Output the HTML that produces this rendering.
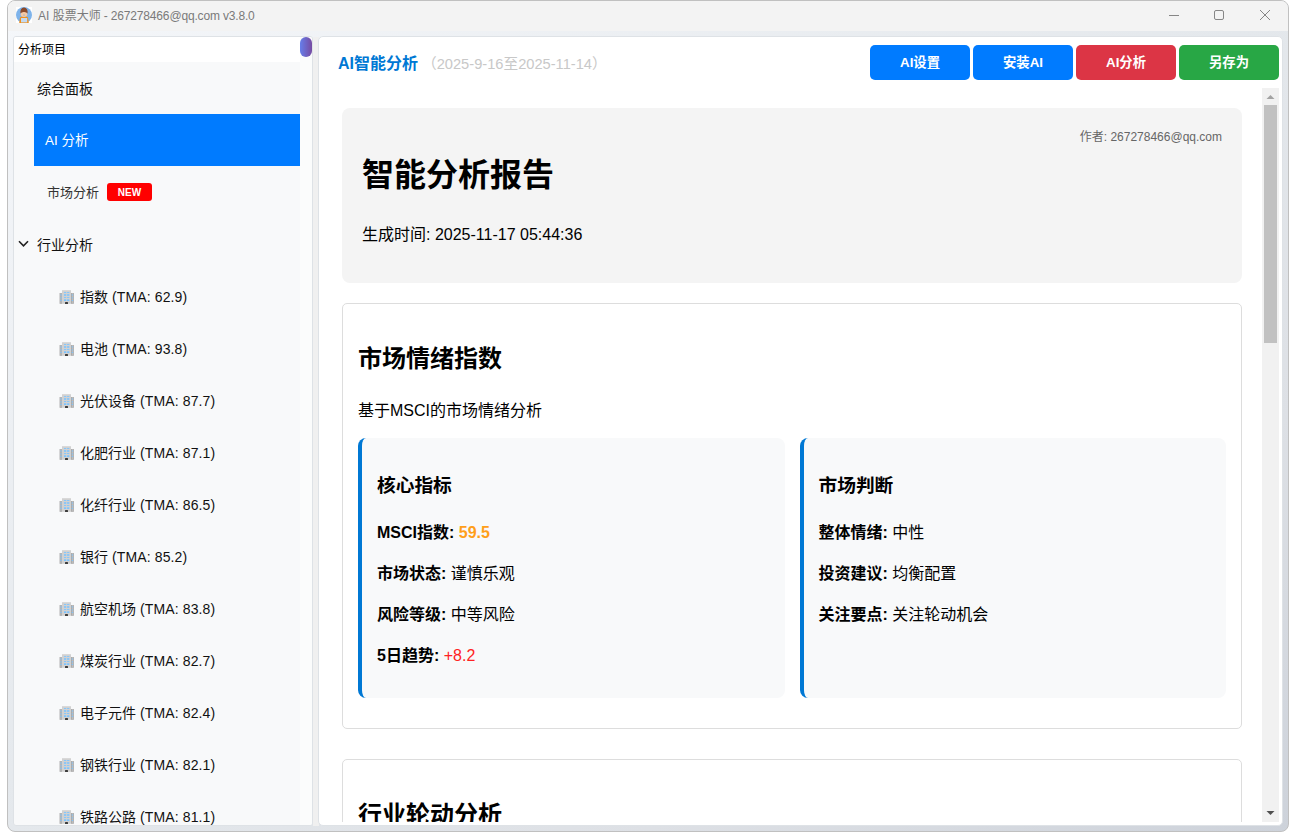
<!DOCTYPE html>
<html lang="zh-CN">
<head>
<meta charset="utf-8">
<title>AI 股票大师</title>
<style>
*{box-sizing:border-box;}
html,body{margin:0;padding:0;}
body{width:1296px;height:839px;overflow:hidden;background:#fff;position:relative;
  font-family:"Liberation Sans","Noto Sans CJK SC",sans-serif;color:#000;}
.win{position:absolute;left:7px;top:0;width:1282px;height:832px;border:1px solid #c0c0c0;border-radius:8px;overflow:hidden;
  background:linear-gradient(to bottom right,#f5f7fa 0%,#e4e8ec 50%,#dde0e5 75%,#cdd2da 100%);}
.tbar{position:absolute;left:0;top:0;width:1280px;height:30px;background:#f3f3f3;}
.ttext{position:absolute;left:30px;top:7px;font-size:12px;line-height:16px;color:#7a7a7a;white-space:nowrap;}
.ticon{position:absolute;left:8px;top:6px;width:16px;height:16px;}
.ctl{position:absolute;top:0;}

/* left panel */
.left{position:absolute;left:5px;top:35px;width:300px;height:790px;background:#f8f9fa;border:1px solid #dee2e6;border-radius:3px;overflow:hidden;}
.lhead{position:absolute;left:0;top:0;width:286px;height:25px;background:#fff;font-size:12px;line-height:27px;overflow:hidden;padding-left:4px;color:#000;}
.lsb{position:absolute;left:286px;top:0;width:12px;height:788px;background:#fbfcfc;}
.lsb i{position:absolute;left:0;top:0;width:12px;height:20px;border-radius:6px;background:linear-gradient(90deg,#667eea,#764ba2);}
.it{position:absolute;left:0;width:286px;height:52px;line-height:54px;font-size:14px;white-space:nowrap;color:#111;overflow:hidden;}
.it.sel{left:20px;width:266px;background:#007bff;color:#fff;font-size:13.5px;}
.badge{position:absolute;left:93px;top:17px;width:45px;height:18px;border-radius:3px;background:#ff0000;color:#fff;font-size:10px;font-weight:bold;line-height:20px;text-align:center;overflow:hidden;}
.bico{position:absolute;left:46px;top:20px;width:14px;height:14px;overflow:visible;}

.split{position:absolute;left:305px;top:36px;width:6px;height:789px;background:#f0f0f0;}

/* right panel */
.right{position:absolute;left:310px;top:35px;width:965px;height:790px;background:#fff;border:1px solid #dee2e6;border-radius:5px;overflow:hidden;}
.rt{position:absolute;left:19px;top:15px;font-size:16px;font-weight:bold;color:#0078d4;line-height:24px;white-space:nowrap;}
.rd{position:absolute;left:103px;top:15px;font-size:14.67px;color:#c8c8c8;line-height:24px;white-space:nowrap;}
.btn{position:absolute;top:8px;width:100px;height:35px;border-radius:5px;color:#fff;font-size:13.33px;font-weight:bold;line-height:35px;text-align:center;}

.web{position:absolute;left:8px;top:51px;width:952px;height:734px;overflow:hidden;background:#fff;}
.vsb{position:absolute;left:935px;top:0;width:17px;height:734px;background:#f1f1f1;}
.vsb i{position:absolute;left:2px;top:17px;width:13px;height:238px;background:#c1c1c1;}
.doc{position:absolute;left:0;top:0;width:935px;padding:20px 20px 0 15px;font-size:16px;line-height:25px;color:#000;}
.hero{position:relative;height:175px;background:#f4f4f4;border-radius:8px;margin-bottom:20px;}
.hero h1{position:absolute;left:20px;top:43px;margin:0;font-size:32px;line-height:48px;font-weight:bold;}
.hero .gen{position:absolute;left:20px;top:115px;font-size:16px;line-height:24px;}
.hero .au{position:absolute;right:20px;top:21px;font-size:12px;line-height:16px;color:#666;}
.card{border:1px solid #ddd;border-radius:5px;padding:15px;margin-bottom:30px;}
.card h2{margin:22px 0 21px;font-size:24px;line-height:36px;font-weight:bold;}
.card p{margin:16px 0;}
.card>p{margin-bottom:15px;}
.grid{display:grid;grid-template-columns:1fr 1fr;gap:15px;margin-bottom:15px;}
.sub{background:#f8f9fa;border-left:4px solid #0078d4;border-radius:8px;padding:15px;height:260px;}
.sub h3{margin:19px 0 20px;font-size:18.72px;line-height:28px;font-weight:bold;}
b{font-weight:bold;}
.ls{letter-spacing:0.12px;}
</style>
</head>
<body>
<div class="win">
  <div class="tbar">
    <svg class="ticon" viewBox="0 0 16 16"><rect width="16" height="16" fill="#fff"/><circle cx="8" cy="8" r="8" fill="#7eb3ea"/><path d="M3.2 16 L4 10.4 Q8 8.2 12 10.4 L12.8 16 Z" fill="#ef8f1c"/><rect x="5" y="11" width="6.2" height="4.4" fill="#c3d9f1"/><ellipse cx="8" cy="7.2" rx="3.3" ry="2.7" fill="#f6c8a3"/><rect x="7" y="7.4" width="2" height="1.2" rx="0.6" fill="#9bb4cc"/><path d="M4.4 6.6 Q3.9 0.6 8 0.4 Q12.1 0.6 11.6 6.6 Q10.6 4.9 8 5 Q5.4 4.9 4.4 6.6Z" fill="#8b4a2b"/></svg>
    <div class="ttext">AI 股票大师<span style="letter-spacing:-0.17px"> - 267278466@qq.com v3.8.0</span></div>
    <svg class="ctl" style="left:1150px;top:-1px" width="130" height="30" viewBox="0 0 130 30" fill="none" stroke="#868686" stroke-width="1">
      <path d="M11 15.5 H21"/>
      <rect x="56.5" y="10.5" width="9" height="9" rx="1.5"/>
      <path d="M102 10 L112 20 M112 10 L102 20"/>
    </svg>
  </div>

  <div class="left">
    <div class="lhead">分析项目</div>
    <div class="it" style="top:25px;padding-left:23px">综合面板</div>
    <div class="it sel" style="top:77px;padding-left:11px">AI 分析</div>
    <div class="it" style="top:129px;padding-left:33px;font-size:13px;color:#333">市场分析<span class="badge">NEW</span></div>
    <div class="it" style="top:181px;padding-left:23px">行业分析
      <svg style="position:absolute;left:4px;top:22px" width="11" height="8" viewBox="0 0 11 8" fill="none" stroke="#222" stroke-width="1.6"><path d="M1 1.2 L5.5 5.8 L10 1.2"/></svg>
    </div>
    <div class="it" style="top:233px;padding-left:66px"><svg class="bico" viewBox="0 0 14 14"><use href="#bld"/></svg>指数<span class="ls"> (TMA: 62.9)</span></div>
    <div class="it" style="top:285px;padding-left:66px"><svg class="bico" viewBox="0 0 14 14"><use href="#bld"/></svg>电池<span class="ls"> (TMA: 93.8)</span></div>
    <div class="it" style="top:337px;padding-left:66px"><svg class="bico" viewBox="0 0 14 14"><use href="#bld"/></svg>光伏设备<span class="ls"> (TMA: 87.7)</span></div>
    <div class="it" style="top:389px;padding-left:66px"><svg class="bico" viewBox="0 0 14 14"><use href="#bld"/></svg>化肥行业<span class="ls"> (TMA: 87.1)</span></div>
    <div class="it" style="top:441px;padding-left:66px"><svg class="bico" viewBox="0 0 14 14"><use href="#bld"/></svg>化纤行业<span class="ls"> (TMA: 86.5)</span></div>
    <div class="it" style="top:493px;padding-left:66px"><svg class="bico" viewBox="0 0 14 14"><use href="#bld"/></svg>银行<span class="ls"> (TMA: 85.2)</span></div>
    <div class="it" style="top:545px;padding-left:66px"><svg class="bico" viewBox="0 0 14 14"><use href="#bld"/></svg>航空机场<span class="ls"> (TMA: 83.8)</span></div>
    <div class="it" style="top:597px;padding-left:66px"><svg class="bico" viewBox="0 0 14 14"><use href="#bld"/></svg>煤炭行业<span class="ls"> (TMA: 82.7)</span></div>
    <div class="it" style="top:649px;padding-left:66px"><svg class="bico" viewBox="0 0 14 14"><use href="#bld"/></svg>电子元件<span class="ls"> (TMA: 82.4)</span></div>
    <div class="it" style="top:701px;padding-left:66px"><svg class="bico" viewBox="0 0 14 14"><use href="#bld"/></svg>钢铁行业<span class="ls"> (TMA: 82.1)</span></div>
    <div class="it" style="top:753px;padding-left:66px"><svg class="bico" viewBox="0 0 14 14"><use href="#bld"/></svg>铁路公路<span class="ls"> (TMA: 81.1)</span></div>
    <div class="lsb"><i></i></div>
  </div>
  <div class="split"></div>

  <div class="right">
    <div class="rt">AI智能分析</div>
    <div class="rd">（2025-9-16至2025-11-14）</div>
    <div class="btn" style="left:551px;background:#007bff">AI设置</div>
    <div class="btn" style="left:654px;background:#007bff">安装AI</div>
    <div class="btn" style="left:757px;background:#dc3545">AI分析</div>
    <div class="btn" style="left:860px;background:#28a745">另存为</div>

    <div class="web">
      <div class="doc">
        <div class="hero">
          <div class="au">作者: 267278466@qq.com</div>
          <h1>智能分析报告</h1>
          <div class="gen">生成时间: 2025-11-17 05:44:36</div>
        </div>
        <div class="card">
          <h2>市场情绪指数</h2>
          <p>基于MSCI的市场情绪分析</p>
          <div class="grid">
            <div class="sub">
              <h3>核心指标</h3>
              <p><b>MSCI指数:</b> <b style="color:#ff9f1a">59.5</b></p>
              <p><b>市场状态:</b> 谨慎乐观</p>
              <p><b>风险等级:</b> 中等风险</p>
              <p><b>5日趋势:</b> <span style="color:#f22">+8.2</span></p>
            </div>
            <div class="sub">
              <h3>市场判断</h3>
              <p><b>整体情绪:</b> 中性</p>
              <p><b>投资建议:</b> 均衡配置</p>
              <p><b>关注要点:</b> 关注轮动机会</p>
            </div>
          </div>
        </div>
        <div class="card" style="height:300px">
          <h2>行业轮动分析</h2>
        </div>
      </div>
      <div class="vsb"><i></i>
        <svg style="position:absolute;left:0;top:0" width="17" height="17" viewBox="0 0 17 17"><path d="M4.5 11 L8.5 7 L12.5 11 Z" fill="#a3a3a3"/></svg>
        <svg style="position:absolute;left:0;top:717px" width="17" height="17" viewBox="0 0 17 17"><path d="M4.5 6 L8.5 10 L12.5 6 Z" fill="#505050"/></svg>
      </div>
    </div>
  </div>
</div>

<svg width="0" height="0" style="position:absolute">
  <defs>
    <g id="bld">
      <rect x="-0.4" y="3" width="2.4" height="10.8" fill="#a4a4a4"/>
      <rect x="11" y="3" width="2.8" height="10.8" fill="#a4a4a4"/>
      <rect x="0.3" y="3" width="1.4" height="10.8" fill="#bcbcbc"/>
      <rect x="11.7" y="3" width="1.4" height="10.8" fill="#bcbcbc"/>
      <rect x="2" y="0.2" width="9" height="13.6" fill="#d1d1d1"/>
      <g fill="#7cc4ff">
        <rect x="4" y="2" width="2.2" height="0.9"/><rect x="7.1" y="2" width="2.2" height="0.9"/>
        <rect x="4" y="4.2" width="2.2" height="1.6"/><rect x="7.1" y="4.2" width="2.2" height="1.6"/>
        <rect x="4" y="7.1" width="2.2" height="0.9"/><rect x="7.1" y="7.1" width="2.2" height="0.9"/>
        <rect x="4" y="9.3" width="2.2" height="1.7"/><rect x="7.1" y="9.3" width="2.2" height="1.7"/>
        <rect x="0.3" y="4.5" width="1.4" height="1"/><rect x="0.3" y="7.4" width="1.4" height="1"/><rect x="0.3" y="9.9" width="1.4" height="1"/>
        <rect x="11.7" y="4.5" width="1.4" height="1"/><rect x="11.7" y="7.4" width="1.4" height="1"/><rect x="11.7" y="9.9" width="1.4" height="1"/>
      </g>
      <rect x="5" y="12.3" width="3" height="1.5" rx="0.4" fill="#0a0a0a"/>
    </g>
  </defs>
</svg>
</body>
</html>
